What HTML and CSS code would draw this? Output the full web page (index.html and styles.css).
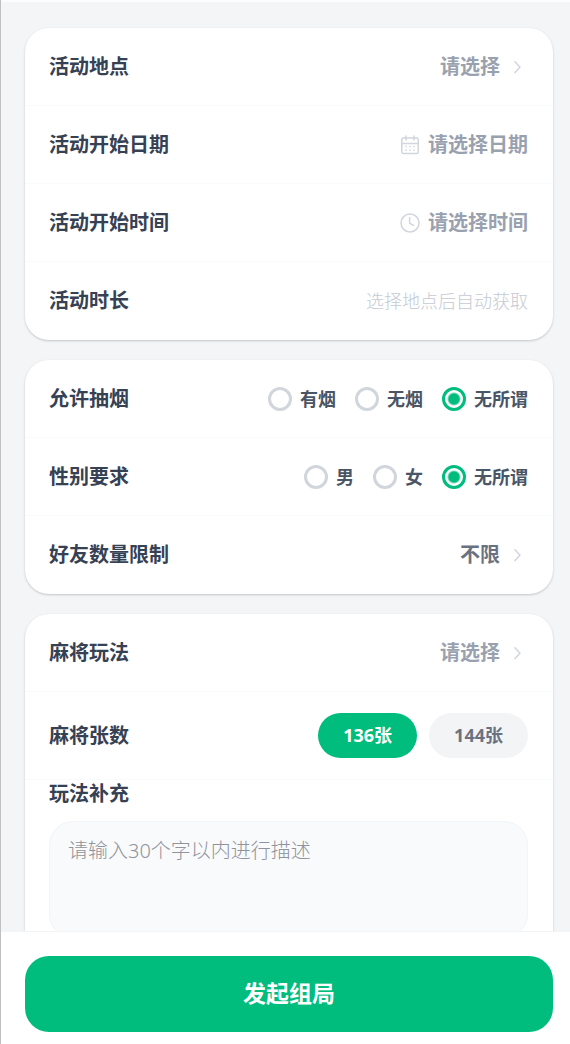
FILE: index.html
```html
<!DOCTYPE html>
<html lang="zh-CN">
<head>
<meta charset="utf-8">
<meta name="viewport" content="width=device-width, initial-scale=1">
<title>发起组局</title>
<link rel="stylesheet" href="styles.css">
</head>
<body>
<form class="page">
  <main class="content">
    <section class="card">
      <div class="row">
        <span class="label" id="place">活动地点</span>
        <button type="button" class="value placeholder" aria-describedby="place">请选择
          <svg class="icon" viewBox="0 0 20 20" aria-hidden="true"><path d="M7 4.8 12 10.2 7 15.6"/></svg>
        </button>
      </div>
      <div class="row">
        <span class="label" id="date">活动开始日期</span>
        <button type="button" class="value placeholder" aria-describedby="date">
          <svg class="icon" viewBox="0 0 20 20" aria-hidden="true"><rect x="1.8" y="3" width="16.4" height="15.6" rx="1.6"/><path d="M1.8 8.4h16.4M6 1v4M14 1v4"/><path class="dots" d="M5.4 11.6h1.4M9.3 11.6h1.4M13.2 11.6h1.4M5.4 15.2h1.4M9.3 15.2h1.4M13.2 15.2h1.4"/></svg>
          请选择日期
        </button>
      </div>
      <div class="row">
        <span class="label" id="time">活动开始时间</span>
        <button type="button" class="value placeholder" aria-describedby="time">
          <svg class="icon" viewBox="0 0 20 20" aria-hidden="true"><circle cx="10" cy="10" r="9"/><path d="M9.6 4.8v5.4l4 2.2"/></svg>
          请选择时间
        </button>
      </div>
      <div class="row">
        <span class="label">活动时长</span>
        <span class="hint">选择地点后自动获取</span>
      </div>
    </section>

    <section class="card">
      <div class="row" role="radiogroup" aria-labelledby="smoke">
        <span class="label" id="smoke">允许抽烟</span>
        <div class="options">
          <label class="option"><input class="radio" type="radio" name="smoke">有烟</label>
          <label class="option"><input class="radio" type="radio" name="smoke">无烟</label>
          <label class="option"><input class="radio" type="radio" name="smoke" checked>无所谓</label>
        </div>
      </div>
      <div class="row" role="radiogroup" aria-labelledby="gender">
        <span class="label" id="gender">性别要求</span>
        <div class="options">
          <label class="option"><input class="radio" type="radio" name="gender">男</label>
          <label class="option"><input class="radio" type="radio" name="gender">女</label>
          <label class="option"><input class="radio" type="radio" name="gender" checked>无所谓</label>
        </div>
      </div>
      <div class="row">
        <span class="label" id="friends">好友数量限制</span>
        <button type="button" class="value" aria-describedby="friends">不限
          <svg class="icon" viewBox="0 0 20 20" aria-hidden="true"><path d="M7 4.8 12 10.2 7 15.6"/></svg>
        </button>
      </div>
    </section>

    <section class="card">
      <div class="row">
        <span class="label" id="rules">麻将玩法</span>
        <button type="button" class="value placeholder" aria-describedby="rules">请选择
          <svg class="icon" viewBox="0 0 20 20" aria-hidden="true"><path d="M7 4.8 12 10.2 7 15.6"/></svg>
        </button>
      </div>
      <div class="row row-tall">
        <span class="label">麻将张数</span>
        <div class="pills">
          <button type="button" class="pill active" aria-pressed="true">136张</button>
          <button type="button" class="pill" aria-pressed="false">144张</button>
        </div>
      </div>
      <div class="notes">
        <label class="label" for="notes">玩法补充</label>
        <textarea class="textarea" id="notes" maxlength="30" placeholder="请输入30个字以内进行描述"></textarea>
      </div>
    </section>
  </main>
  <footer class="footer">
    <button type="submit" class="submit">发起组局</button>
  </footer>
</form>
</body>
</html>
```
FILE: styles.css
```css
* {
  box-sizing: border-box;
}

body {
  margin: 0;
  font-family: "Noto Sans", "Noto Sans CJK SC", sans-serif;
  color: #364153;
}

button,
textarea {
  margin: 0;
  border: 0;
  font-family: inherit;
}

button {
  padding: 0;
  background: none;
  cursor: pointer;
}

.page {
  display: flex;
  flex-direction: column;
  height: 100vh;
  border-left: 1px solid #c0c0c2;
}

.content {
  flex: 1;
  min-height: 0;
  display: flex;
  flex-direction: column;
  gap: 20px;
  padding: 26px 17px 24px 24px;
  overflow-y: auto;
  scrollbar-width: none;
  background: #f4f5f7;
  border-top: 2px solid #fcfcfd;
}

.card {
  flex: none;
  background: #fff;
  border-radius: 24px;
  box-shadow: 0 1px 3px rgba(0, 0, 0, 0.1), 0 1px 2px rgba(0, 0, 0, 0.1);
}

.row {
  display: flex;
  align-items: center;
  justify-content: space-between;
  height: 78px;
  padding: 0 25px 0 24px;
  border-bottom: 1px solid #f9fafb;
}

.row:last-child {
  border-bottom: 0;
}

.row-tall {
  height: 88px;
}

.label {
  font-size: 20px;
  line-height: 28px;
  font-weight: 700;
}

.value {
  display: flex;
  align-items: center;
  gap: 8px;
  font-size: 20px;
  line-height: 28px;
  font-weight: 700;
  color: #6a7282;
}

.placeholder {
  color: #99a1af;
}

.icon {
  width: 20px;
  height: 20px;
  fill: none;
  stroke: #d1d5dc;
  stroke-width: 1.5;
  stroke-linecap: round;
  stroke-linejoin: round;
}

.dots {
  stroke-linecap: butt;
}

.hint {
  font-size: 18px;
  line-height: 28px;
  font-weight: 300;
  color: #c5cad3;
}

.options {
  display: flex;
  gap: 19px;
}

.option {
  display: flex;
  align-items: center;
  gap: 8px;
  font-size: 18px;
  line-height: 28px;
  font-weight: 700;
  color: #4a5565;
}

.radio {
  appearance: none;
  width: 24px;
  height: 24px;
  margin: 0;
  border: 3px solid #d1d5dc;
  border-radius: 50%;
  background: #fff;
}

.radio:checked {
  border-color: #00bc7d;
  background: radial-gradient(circle, #00bc7d 5px, #fff 7px);
}

.pills {
  display: flex;
  gap: 12px;
}

.pill {
  height: 45px;
  padding: 0 25px 3px;
  border-radius: 24px;
  background: #f3f4f6;
  font-size: 18px;
  font-weight: 700;
  color: #6a7282;
}

.pill.active {
  background: #00bc7d;
  color: #fff;
}

.notes {
  display: flex;
  flex-direction: column;
  gap: 13px;
  padding: 0 25px 24px 24px;
}

.textarea {
  width: 100%;
  height: 117px;
  padding: 15px 18px;
  border: 1px solid #f3f4f6;
  border-radius: 24px;
  background: #f9fafb;
  font-size: 20px;
  line-height: 28px;
  font-weight: 300;
  color: #364153;
  resize: none;
}

.textarea::placeholder {
  color: #8e939c;
}

.footer {
  flex: none;
  padding: 24px 17px 12px 24px;
  border-top: 1px solid #f3f4f6;
  background: #fff;
}

.submit {
  width: 100%;
  height: 76px;
  padding-bottom: 5px;
  border-radius: 24px;
  background: #00bc7d;
  font-size: 23px;
  font-weight: 700;
  color: #fff;
}
```
